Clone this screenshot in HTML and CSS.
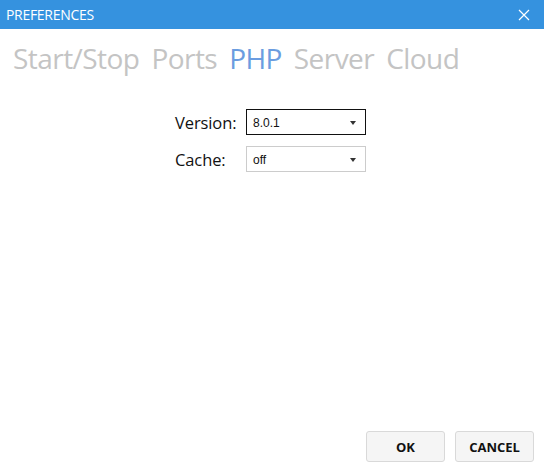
FILE: index.html
```html
<!DOCTYPE html>
<html>
<head>
<meta charset="utf-8">
<link rel="stylesheet" href="styles.css">
</head>
<body>
<div class="window">
  <div class="titlebar">
    <span class="title">PREFERENCES</span>
    <svg class="close" width="12" height="12" viewBox="0 0 12 12"><path d="M1 1L11 11M11 1L1 11" stroke="#fff" stroke-width="1.2"/></svg>
  </div>
  <div class="tabs">
    <span class="tab">Start/Stop</span>
    <span class="tab">Ports</span>
    <span class="tab active">PHP</span>
    <span class="tab">Server</span>
    <span class="tab">Cloud</span>
  </div>
  <div class="form">
    <div class="row">
      <span class="label">Version:</span>
      <div class="select focused"><span>8.0.1</span><span class="arrow"></span></div>
    </div>
    <div class="row">
      <span class="label">Cache:</span>
      <div class="select"><span>off</span><span class="arrow"></span></div>
    </div>
  </div>
  <div class="spacer"></div>
  <div class="buttons">
    <button class="btn">OK</button>
    <button class="btn">CANCEL</button>
  </div>
</div>
</body>
</html>
```
FILE: styles.css
```css
html, body { margin: 0; padding: 0; background: #fff; }
.window { width: 544px; height: 469px; display: flex; flex-direction: column; font-family: "Open Sans", "Noto Sans", sans-serif; }
.titlebar { height: 29px; background: #3592df; display: flex; align-items: center; justify-content: space-between; padding: 0 14px 0 6px; box-sizing: border-box; }
.title { color: #fff; font-size: 14px; letter-spacing: -0.3px; }
.close { display: block; }
.tabs { display: flex; gap: 12px; padding: 9px 0 0 13px; height: 46px; box-sizing: border-box; align-items: flex-start; }
.tab { font-size: 28px; color: #c4c4c4; line-height: 40px; letter-spacing: -0.55px; }
.tab.active { color: #6b9de0; }
.form { display: flex; flex-direction: column; gap: 11px; padding: 34px 0 0 175px; }
.row { display: flex; align-items: center; }
.label { width: 71px; font-size: 16.5px; color: #111; letter-spacing: -0.1px; }
.select { width: 120px; height: 26px; box-sizing: border-box; border: 1px solid #cccccc; display: flex; align-items: center; justify-content: space-between; padding: 2px 9px 0 6px; font-family: "Liberation Sans", Arial, sans-serif; font-size: 12px; color: #111; }
.select.focused { border-color: #111; }
.arrow { width: 0; height: 0; border-left: 3.5px solid transparent; border-right: 3.5px solid transparent; border-top: 4px solid #333; }
.spacer { flex: 1; }
.buttons { display: flex; justify-content: flex-end; gap: 10px; padding: 0 10px 7px 0; }
.btn { width: 79px; height: 31px; background: #f5f5f5; border: 1px solid #d9d9d9; border-radius: 3px; font-family: "Open Sans", sans-serif; font-weight: 700; font-size: 13px; color: #111; padding: 0; }
```
